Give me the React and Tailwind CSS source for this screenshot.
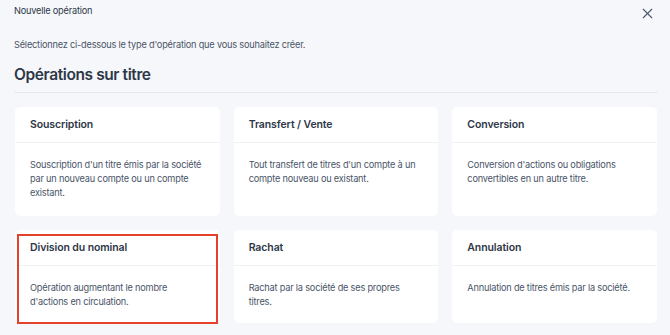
import { X } from 'lucide-react';

const operations = [
  {
    title: 'Souscription',
    text: "Souscription d'un titre émis par la société par un nouveau compte ou un compte existant.",
  },
  {
    title: 'Transfert / Vente',
    text: "Tout transfert de titres d'un compte à un compte nouveau ou existant.",
  },
  {
    title: 'Conversion',
    text: "Conversion d'actions ou obligations convertibles en un autre titre.",
  },
  {
    title: 'Division du nominal',
    text: "Opération augmentant le nombre d'actions en circulation.",
    highlighted: true,
  },
  {
    title: 'Rachat',
    text: 'Rachat par la société de ses propres titres.',
  },
  {
    title: 'Annulation',
    text: 'Annulation de titres émis par la société.',
  },
];

const OperationCard = ({ title, text, highlighted, tall }) => (
  <div className={`relative bg-white rounded-[5px] ${tall ? 'h-[109px]' : 'h-[93px]'}`}>
    <div className="h-[36px] flex items-center px-[15px] border-b border-[#f0f2f5]">
      <p className="text-[10.5px] tracking-[-0.1px] font-semibold text-[#2d3748]">{title}</p>
    </div>
    <p className="px-[15px] pt-[15px] text-[9.2px] tracking-[-0.2px] leading-[14px] text-[#4a5568]">{text}</p>
    {highlighted && (
      <div className="absolute left-[2px] right-[2px] top-[4px] bottom-[-1px] border-2 border-[#e5402a]" />
    )}
  </div>
);

export default function App() {
  return (
    <div
      className="w-[670px] h-[335px] overflow-hidden bg-[#f6f7fa] px-[14px]"
      style={{ fontFamily: 'Inter, "Liberation Sans", sans-serif' }}
    >
      <div className="flex items-center justify-between h-[22px]">
        <p className="text-[9.2px] tracking-[-0.2px] text-[#2d3748]">Nouvelle opération</p>
        <X size={17} strokeWidth={1.6} className="text-[#4a5568] mt-[5px]" />
      </div>
      <p className="mt-[16px] text-[9.2px] tracking-[-0.2px] text-[#4a5568]">
        Sélectionnez ci-dessous le type d'opération que vous souhaitez créer.
      </p>
      <h1 className="mt-[11px] text-[15.5px] tracking-[-0.4px] font-semibold text-[#2d3748]">Opérations sur titre</h1>
      <div className="mt-[6px] mr-[-2px] border-b border-[#e6e9ef]" />
      <div className="mt-[14px] ml-[1px] mr-[-1px] grid grid-cols-3 gap-[14px]">
        {operations.map((op, i) => (
          <OperationCard key={op.title} {...op} tall={i < 3} />
        ))}
      </div>
    </div>
  );
}
